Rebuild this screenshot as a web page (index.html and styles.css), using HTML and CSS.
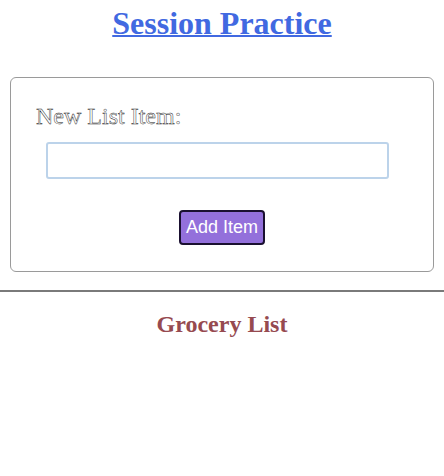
FILE: index.html
```html
<!DOCTYPE html>
<html>
<head>
<meta charset="utf-8">
<link rel="stylesheet" href="styles.css">
</head>
<body>
<h1 class="title"><a href="#" class="title-link">Session Practice</a></h1>
<form class="card">
  <label class="label" for="item">New List Item:</label>
  <input class="field" id="item" type="text">
  <div class="actions"><button class="btn" type="button">Add Item</button></div>
</form>
<hr class="rule">
<h2 class="subtitle">Grocery List</h2>
</body>
</html>
```
FILE: styles.css
```css
body {
  margin: 0;
  font-family: "Liberation Serif", "Times New Roman", serif;
  background: #fff;
}
.title {
  margin: 0;
  padding-top: 3px;
  text-align: center;
  font-size: 32px;
  line-height: 40px;
}
.title-link {
  color: #4169e1;
  text-decoration: underline;
  text-decoration-thickness: 2px;
}
.card {
  margin: 34px 10px 0 10px;
  border: 1px solid #9a9a9a;
  border-radius: 6px;
  padding: 25px 0 26px 0;
  display: flex;
  flex-direction: column;
}
.label {
  margin-left: 25px;
  font-size: 24px;
  line-height: 27px;
  color: #fff;
  -webkit-text-stroke: 0.45px #222;
}
.field {
  margin: 12px 0 0 35px;
  width: 343px;
  height: 37px;
  box-sizing: border-box;
  border: 2px solid #bcd3ea;
  border-radius: 3px;
  outline: none;
}
.actions {
  display: flex;
  justify-content: center;
  margin-top: 31px;
}
.btn {
  background: #9370db;
  color: #fff;
  border: 2px solid #1a1030;
  border-radius: 4px;
  font-family: "Liberation Sans", Arial, sans-serif;
  font-size: 18px;
  height: 35px;
  padding: 0 5px;
}
.rule {
  margin: 18px 0 0 0;
  border: 0;
  border-top: 2px solid #7a7a7a;
}
.subtitle {
  margin: 19px 0 0 0;
  text-align: center;
  font-size: 24px;
  color: #964a50;
}
```
